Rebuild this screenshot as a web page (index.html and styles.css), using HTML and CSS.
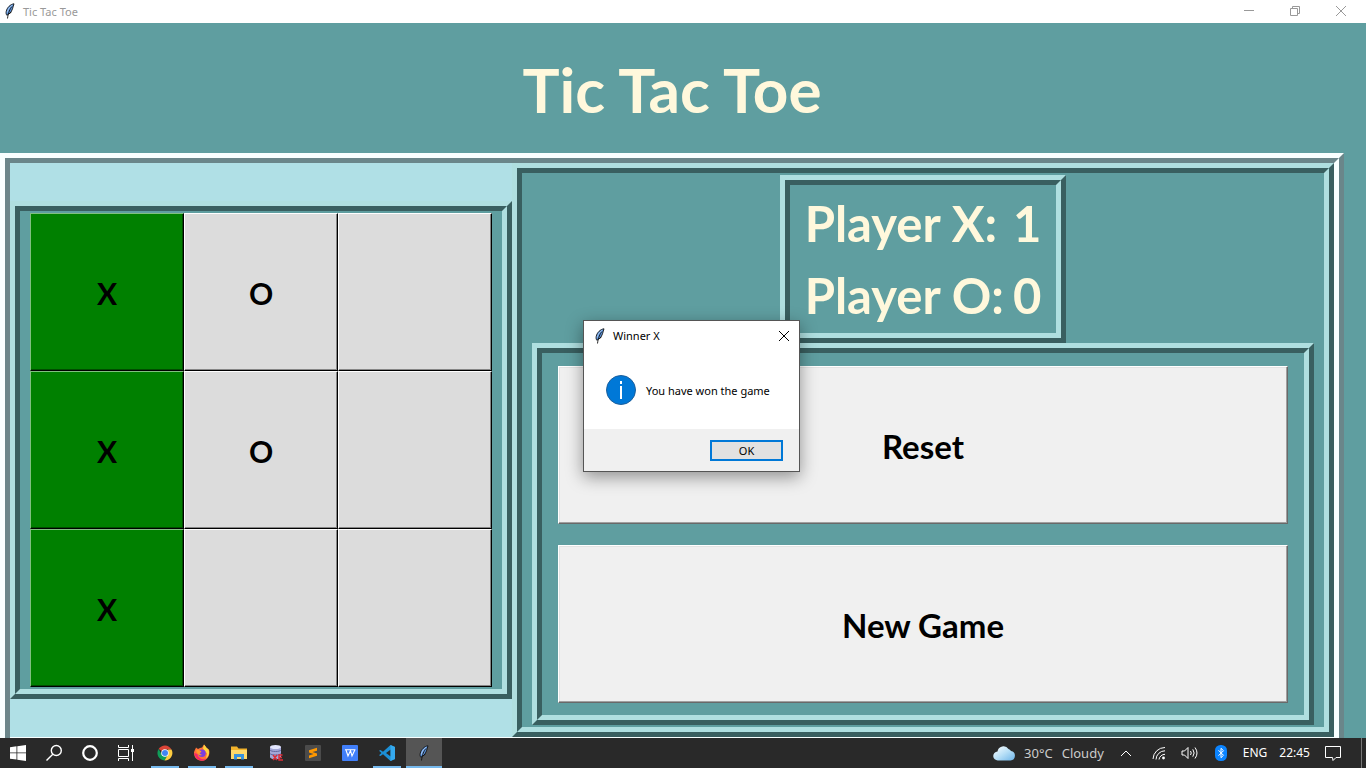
FILE: index.html
```html
<!DOCTYPE html>
<html lang="en">
<head>
<meta charset="utf-8">
<title>Tic Tac Toe</title>
<link rel="stylesheet" href="styles.css">
</head>
<body>
<svg class="sprite" aria-hidden="true">
  <symbol id="feather" viewBox="0 0 12 16">
    <path d="M10 .8C6.500 1.200 3 4.500 2.200 8.500c-.3 1.500-.1 2.700.6 3.700 2.400-.8 4.600-3 5.700-6.400.6-2 1-3.500 1.500-5z" fill="#5b93dc" stroke="#111" stroke-width=".9"/>
    <path d="M8 3.500C6 6 4.300 9 3.500 15.500M5.500 10.500l2-1.500" fill="none" stroke="#111" stroke-width=".9"/>
    <path d="M8.300 2.200C5.500 3.700 3.800 6.500 3.300 9.500" fill="none" stroke="#b9d3f5" stroke-width=".8"/>
  </symbol>
</svg>

<header class="titlebar">
  <svg class="feather"><use href="#feather"/></svg>
  <span class="titlebar-text">Tic Tac Toe</span>
  <button class="win-btn" aria-label="Minimize"><svg width="12" height="12" viewBox="0 0 12 12"><path d="M1 5.500h10"/></svg></button>
  <button class="win-btn" aria-label="Restore"><svg width="12" height="12" viewBox="0 0 12 12"><path d="M1.500 3.500h7v7h-7zM3.500 3.500v-2h7v7h-2"/></svg></button>
  <button class="win-btn" aria-label="Close"><svg width="12" height="12" viewBox="0 0 12 12"><path d="M1 1l10 10M11 1L1 11"/></svg></button>
</header>

<main class="app">
  <h1 class="heading">Tic Tac Toe</h1>
  <div class="stage-out">
    <div class="stage-in">
      <div class="stage">
        <section class="ridge board-frame">
          <div class="ridge-in board">
            <button class="cell win">X</button><button class="cell">O</button><button class="cell" aria-label="Empty"></button>
            <button class="cell win">X</button><button class="cell">O</button><button class="cell" aria-label="Empty"></button>
            <button class="cell win">X</button><button class="cell" aria-label="Empty"></button><button class="cell" aria-label="Empty"></button>
          </div>
        </section>
        <section class="ridge side-frame">
          <div class="ridge-in side">
            <div class="ridge score-frame">
              <dl class="ridge-in score">
                <dt>Player X:</dt><dd>1</dd>
                <dt>Player O:</dt><dd>0</dd>
              </dl>
            </div>
            <div class="ridge actions-frame">
              <div class="ridge-in actions">
                <button class="action">Reset</button>
                <button class="action">New Game</button>
              </div>
            </div>
          </div>
        </section>
      </div>
    </div>
  </div>
</main>

<div class="dialog" role="dialog" aria-labelledby="dialog-title">
  <div class="dialog-bar">
    <svg class="feather"><use href="#feather"/></svg>
    <span id="dialog-title" class="dialog-title">Winner X</span>
    <button class="dialog-close" aria-label="Close"><svg width="12" height="12" viewBox="0 0 12 12"><path d="M1 1l10 10M11 1L1 11"/></svg></button>
  </div>
  <div class="dialog-body">
    <svg width="30" height="30" viewBox="0 0 30 30"><circle cx="15" cy="15" r="14.500" fill="#0078d7" stroke="#1c5f9c"/><path d="M14 6h2v3h-2zM14 11h2v13h-2z" fill="#fff"/></svg>
    <p class="message">You have won the game</p>
  </div>
  <div class="dialog-foot"><button class="ok">OK</button></div>
</div>

<footer class="taskbar">
  <nav class="system" aria-label="System">
    <button class="task" aria-label="Start"><svg width="16" height="16" viewBox="0 0 16 16" fill="#fff"><path d="M0 2.200l6.500-.9v6.200H0zM7.300 1.200L16 0v7.500H7.300zM0 8.300h6.500v6.300L0 13.700zM7.300 8.300H16V16l-8.700-1.200z"/></svg></button>
    <button class="task" aria-label="Search"><svg width="18" height="18" viewBox="0 0 18 18" fill="none" stroke="#fff" stroke-width="1.400"><circle cx="11.300" cy="6.500" r="5"/><path d="M7.800 10.200L1.500 16.500"/></svg></button>
    <button class="task" aria-label="Cortana"><svg width="18" height="18" viewBox="0 0 18 18"><circle cx="9" cy="9" r="6.800" fill="none" stroke="#fff" stroke-width="2.200"/></svg></button>
    <button class="task" aria-label="Task view"><svg width="18" height="18" viewBox="0 0 18 18" fill="none" stroke="#fff"><path d="M1.500 1v2.500h10V1M1.500 17v-2.500h10V17M1.500 5.500h10v7h-10zM15.500 1v16"/><path d="M14 5h3v3h-3z" fill="#fff" stroke="none"/></svg></button>
  </nav>
  <nav class="apps" aria-label="Applications">
    <button class="task open" aria-label="Chrome"><svg width="16" height="16" viewBox="0 0 16 16"><path d="M8 8L1.600 4A7.500 7.500 0 0 1 14.500 4.500H8z" fill="#db4437"/><path d="M1.600 4A7.500 7.500 0 0 0 7.500 15.500L11 9.500 5 10z" fill="#0f9d58"/><path d="M14.500 4.500A7.500 7.500 0 0 1 7.500 15.500L11.300 9 11 4.500z" fill="#ffcd40"/><circle cx="8" cy="8" r="3.800" fill="#fff"/><circle cx="8" cy="8" r="3" fill="#4285f4"/></svg></button>
    <button class="task open" aria-label="Firefox"><svg width="18" height="18" viewBox="0 0 18 18"><path d="M3 3.500l2 1.500 2-1 2-.5 2-3c1 1 1.500 2.200 2.500 3.200l2.500 2c1.500 4-1 11-7 11S.8 12 1 8.500c.2-2 1.500-3 2-5z" fill="#ff7139"/><path d="M11 .5c1 1 1.500 2.200 2.500 3.200l1.800 1.600c1.500 3 .7 7-2.300 9.200l1-5-4-5z" fill="#ffd53d"/><path d="M1.200 9c.8 5 4 7.500 7.800 7.700 2 0 3.500-.7 4.500-1.700-4 1-9-1-9-5z" fill="#f5256a"/><circle cx="9" cy="9.300" r="3.700" fill="#7a3fe0"/><path d="M3 6c2-.5 4 .2 5.500 1.500L6.500 9.500 9 11c-3 1-5-1-6-5z" fill="#ff9a2a"/></svg></button>
    <button class="task open" aria-label="File Explorer"><svg width="18" height="16" viewBox="0 0 18 16"><path d="M1 1.500h6l1.500 2H17V14H1z" fill="#f2b32c"/><path d="M1 5h16v9H1z" fill="#ffd96a"/><path d="M4 14.500V9h10v5.500h-3V12H7v2.500z" fill="#3993dd"/></svg></button>
    <button class="task" aria-label="Database"><svg width="16" height="18" viewBox="0 0 16 18"><path d="M2 3v10c0 3 11 3 11 0V3z" fill="#a3a7d8"/><ellipse cx="7.500" cy="3" rx="5.500" ry="2" fill="#e4e7ff"/><path d="M2 6c1 2 10 2 11 0M2 9.500c1 2 10 2 11 0" fill="none" stroke="#65699f"/><path d="M5 11l4 5M9 11l-4 5M14.500 11H11v5h4M11 13.500h3" fill="none" stroke="#e02b35" stroke-width="1.400"/></svg></button>
    <button class="task" aria-label="Sublime Text"><svg width="16" height="16" viewBox="0 0 16 16"><rect width="16" height="16" rx="1" fill="#4b4b4b"/><path d="M4 5.300l8-2.500v2.900L7.500 7.100 12 8.500v2.300l-8 2.500v-2.900L8.500 9 4 7.600z" fill="#ff9800"/></svg></button>
    <button class="task" aria-label="WPS Writer"><svg width="16" height="16" viewBox="0 0 16 16"><rect width="16" height="16" rx="1" fill="#417ff9"/><path d="M3 4.700h10.500M4 5l2 6 2.500-5.500L10 11l2.800-6" fill="none" stroke="#fff" stroke-width="1.100"/></svg></button>
    <button class="task open" aria-label="Visual Studio Code"><svg width="16" height="16" viewBox="0 0 16 16"><path d="M11.500 0L16 2v12l-4.500 2L4 9.200 1.500 11 0 10.200 2.400 8 0 5.800 1.500 5 4 6.800zM11.700 4.500L7 8l4.700 3.500z" fill="#1c8fd6" fill-rule="evenodd"/><path d="M11.500 0L16 2v12l-4.500 2z" fill="#35a9ee"/></svg></button>
    <button class="task open current" aria-label="Tic Tac Toe"><svg class="feather"><use href="#feather"/></svg></button>
  </nav>
  <div class="tray">
    <div class="weather">
      <svg width="22" height="16" viewBox="0 0 22 16"><defs><linearGradient id="cloud" x2="1" y2="1"><stop offset="0" stop-color="#fff"/><stop offset=".5" stop-color="#b9e0f7"/><stop offset="1" stop-color="#6db4e8"/></linearGradient></defs><path d="M5 15.500a4.500 4.500 0 0 1-.5-9A6 6 0 0 1 15.500 4 5 5 0 0 1 18 6a4.800 4.800 0 0 1-.5 9.500z" fill="url(#cloud)"/></svg>
      <span>30°C</span><span>Cloudy</span>
    </div>
    <svg class="chevron" width="12" height="8" viewBox="0 0 12 8"><path d="M1 7l5-5 5 5"/></svg>
    <svg class="wifi" width="14" height="14" viewBox="0 0 14 14"><path d="M1 13A12 12 0 0 1 13 1.500M4 13.500A9 9 0 0 1 13 4.800M7 13.500a6 6 0 0 1 6-5.200"/><circle cx="11.500" cy="12" r="1.400" fill="#fff" stroke="none"/></svg>
    <svg class="volume" width="18" height="14" viewBox="0 0 18 14"><path d="M1 5h2.500L7 1.500v11L3.500 9H1zM9.500 5q1.500 2 0 4M11.800 3.300q2.700 3.700 0 7.400M14 1.500q4 5.500 0 11"/></svg>
    <svg class="bluetooth" width="12" height="16" viewBox="0 0 12 16"><rect width="12" height="16" rx="5.500" fill="#0b84ff" stroke="none"/><path d="M3.500 5.300l5 5L6 12.700V3.300l2.500 2.400-5 5"/></svg>
    <span class="lang">ENG</span>
    <time class="clock">22:45</time>
    <svg class="notes" width="16" height="17" viewBox="0 0 16 17"><path d="M.5 1.500h15v11h-4.500L8 15.500l-.5-3h-7z"/></svg>
  </div>
</footer>
</body>
</html>
```
FILE: styles.css
```css
:root {
  --cadet: #5f9ea0;
  --powder: #b0e0e6;
  --light: #afdfe0;
  --dark: #395f60;
  --cream: #fff8dc;
  --ui: "Noto Sans", "Open Sans", sans-serif;
  --display: Lato, sans-serif;
}

* { box-sizing: border-box; }

body {
  margin: 0;
  height: 100vh;
  display: flex;
  flex-direction: column;
  overflow: hidden;
  background: var(--cadet);
  color: #000;
  font: 12px/16px var(--ui);
}

button {
  margin: 0;
  padding: 0;
  border: 0;
  background: none;
  color: inherit;
  font: inherit;
}

svg { display: block; flex: none; }
.sprite { position: absolute; width: 0; height: 0; }
.feather { width: 12px; height: 16px; }

/* Window title bar */
.titlebar {
  flex: none;
  display: flex;
  align-items: center;
  height: 23px;
  padding: 0 2px 2px 4px;
  background: #fff;
  color: #999;
  font-size: 11px;
}
.titlebar-text { flex: 1; padding: 2px 0 0 7px; }
.win-btn { width: 46px; height: 20px; display: grid; place-items: center; }
.win-btn path { fill: none; stroke: #999; }

/* Application */
.app {
  flex: 1;
  min-height: 0;
  display: flex;
  flex-direction: column;
  padding-right: 22px;
}
.heading {
  flex: none;
  margin: 0;
  height: 130px;
  color: var(--cream);
  font: bold 62px/132px var(--display);
  text-align: center;
}
.stage-out, .stage-in {
  flex: 1;
  min-height: 0;
  display: flex;
  border: 5px solid;
  border-bottom: 0;
}
.stage-out { border-color: #f8ffff #6a868a #6a868a #f8ffff; }
.stage-in { border-color: #6a868a #f8ffff #f8ffff #6a868a; }
.stage {
  flex: 1;
  display: grid;
  grid-template-columns: 502fr 822fr;
  align-items: center;
  background: var(--powder);
  border-bottom: 1px solid #f8ffff;
}

.ridge {
  display: flex;
  border: 5px solid;
  border-color: var(--light) var(--dark) var(--dark) var(--light);
}
.ridge-in {
  flex: 1;
  border: 5px solid;
  border-color: var(--dark) var(--light) var(--light) var(--dark);
  background: var(--cadet);
}

.board {
  display: grid;
  grid-template-columns: repeat(3, 1fr);
  grid-auto-rows: 158px;
  padding: 2px 10px;
}
.cell {
  border: 1px solid;
  border-color: #fff #000 #000 #fff;
  box-shadow: inset -1px -1px #868686;
  background: #dcdcdc;
  font: bold 30px/40px var(--display);
  padding-top: 2px;
}
.cell.win {
  border-color: #80c080 #000 #000 #80c080;
  box-shadow: inset -1px -1px #004d00;
  background: #008000;
}

.side-frame { align-self: stretch; }
.side {
  display: flex;
  flex-direction: column;
  padding: 2px 10px;
}
.score-frame { align-self: center; }
.score {
  display: grid;
  grid-template-columns: auto auto;
  column-gap: 9px;
  margin: 0;
  padding: 2px 15px;
  color: var(--cream);
  font: bold 49px/72px var(--display);
}
.score dd { margin: 0; text-align: center; }
.actions-frame { flex: 1; }
.actions {
  display: flex;
  flex-direction: column;
  gap: 21px;
  padding: 13px 16px 12px;
}
.action {
  flex: 1;
  border: 1px solid;
  border-color: #fff #696969 #696969 #fff;
  box-shadow: inset -1px -1px #a0a0a0, inset 1px 1px #e3e3e3;
  background: #f0f0f0;
  font: bold 33px/40px var(--display);
  padding-top: 2px;
}

/* Message box */
.dialog {
  position: absolute;
  left: 583px;
  top: 320px;
  width: 217px;
  border: 1px solid #555;
  background: #fff;
  box-shadow: 0 5px 16px rgba(0, 0, 0, .4);
  font-size: 11px;
}
.dialog-bar {
  display: flex;
  align-items: center;
  height: 29px;
  padding: 0 9px 0 10px;
}
.dialog-title { flex: 1; padding-left: 7px; }
.dialog-close path { fill: none; stroke: #000; }
.dialog-body {
  display: flex;
  align-items: center;
  gap: 10px;
  height: 79px;
  padding: 0 22px;
}
.message { margin: 0; padding-top: 2px; white-space: nowrap; }
.dialog-foot {
  display: flex;
  justify-content: flex-end;
  padding: 11px 16px 10px;
  background: #f0f0f0;
}
.ok {
  width: 73px;
  height: 21px;
  border: 2px solid #0078d7;
  background: #e1e1e1;
}

/* Taskbar */
.taskbar {
  flex: none;
  display: flex;
  justify-content: space-between;
  height: 30px;
  background: #292929;
  color: #fff;
}
.system, .apps { display: flex; }
.task {
  width: 36px;
  display: grid;
  place-items: center;
}
.apps { margin: 0 auto 0 2px; }
.apps .task { width: 37px; position: relative; }
.apps .open::after {
  content: "";
  position: absolute;
  left: 5px;
  right: 4px;
  bottom: 0;
  height: 2px;
  background: #76b9ed;
}
.apps .current { background: #555; width: 36px; margin-left: 1px; }
.apps .current::after { left: 0; right: 0; }
.tray {
  display: flex;
  align-items: center;
  margin-right: 4px;
  border-right: 1px solid #777;
}
.tray path { fill: none; stroke: #fff; }
.weather {
  display: flex;
  align-items: center;
  gap: 9px;
  margin-right: 16px;
  color: #ccc;
  font-size: 13px;
}
.tray .weather path { fill: url(#cloud); stroke: none; }
.wifi { margin-left: 20px; }
.volume { margin-left: 15px; }
.bluetooth { margin-left: 16px; }
.lang { margin-left: 16px; }
.clock { margin: 0 15px 0 12px; }
.notes { margin-right: 20px; }
```
